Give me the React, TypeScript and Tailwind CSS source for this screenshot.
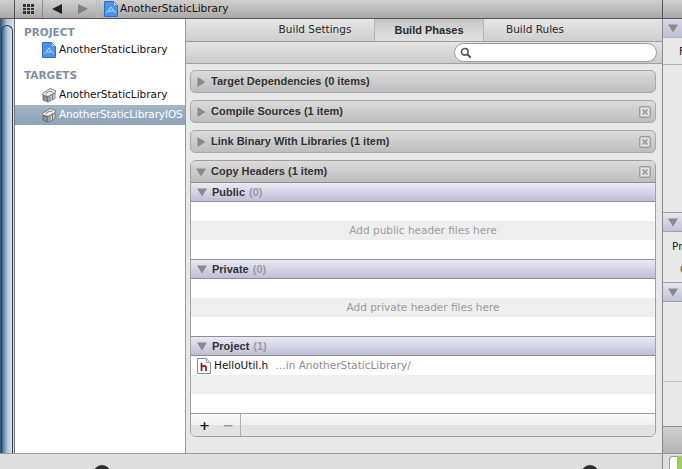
import React from "react";

const ink = "text-[#2a2a2a]";
const heavy = "font-['Liberation_Sans',sans-serif] text-[11px] font-bold";

const Triangle = ({ down }: { down?: boolean }) => (
  <svg width="10" height="10" viewBox="0 0 10 10" className="shrink-0">
    {down ? <path d="M0 1.5h10L5 9.5z" fill="#8a8a8a" /> : <path d="M1.500 0v10L9.500 5z" fill="#8a8a8a" />}
  </svg>
);

const CloseBox = () => (
  <svg width="12" height="12" viewBox="0 0 12 12" className="ml-auto shrink-0">
    <rect x="0.500" y="0.500" width="11" height="11" rx="1.500" fill="#c4c4c4" stroke="#9c9c9c" />
    <rect x="2.500" y="2.500" width="7" height="7" fill="#d6d6d6" stroke="#eeeeee" strokeWidth="0.700" />
    <path d="M3.500 3.500l5 5M8.500 3.500l-5 5" stroke="#929292" strokeWidth="1.100" />
  </svg>
);

const ProjectIcon = () => (
  <svg width="14" height="16" viewBox="0 0 14 16" className="shrink-0">
    <path d="M0.500 0.500h9l4 4v11h-13z" fill="#4f95e6" stroke="#2f6fc0" />
    <path d="M9.500 0.500v4h4z" fill="#d5e6f8" stroke="#2f6fc0" strokeWidth="0.600" />
    <path d="M2.500 12L7 6l4.500 6M5 10h4" fill="none" stroke="#cfe3fa" strokeWidth="0.900" />
  </svg>
);

// little grey "temple" used for static library targets
const TargetIcon = () => (
  <svg width="16" height="16" viewBox="0 0 16 16" className="shrink-0">
    <path d="M1.500 6.500L9 1.500l5.500 2v2L7 9.500 1.500 8z" fill="#ececec" stroke="#6a6a6a" strokeWidth="0.800" />
    <path d="M2 8.500l5 1.500v5L2 13z" fill="#8f8f8f" stroke="#5f5f5f" strokeWidth="0.800" />
    <path d="M7 10l7-4v5.500l-7 3.500z" fill="#d2d2d2" stroke="#6a6a6a" strokeWidth="0.800" />
    <path d="M4.500 6.500l4-2.500 3 1" fill="none" stroke="#7a7a7a" strokeWidth="1" />
    <path d="M9 9.500v4M11.500 8v4" stroke="#777777" strokeWidth="1.100" />
  </svg>
);

const SearchIcon = () => (
  <svg width="12" height="12" viewBox="0 0 12 12" className="shrink-0">
    <circle cx="4.800" cy="4.800" r="3.300" fill="none" stroke="#555555" strokeWidth="1.600" />
    <path d="M7.300 7.300l3.500 3.500" stroke="#555555" strokeWidth="2" />
  </svg>
);

const HeaderFileIcon = () => (
  <svg width="14" height="16" viewBox="0 0 14 16" className="shrink-0">
    <path d="M0.500 0.500h9l4 4v11h-13z" fill="#ffffff" stroke="#8a8a8a" />
    <path d="M9.500 0.500v4h4" fill="#e4e4e4" stroke="#8a8a8a" strokeWidth="0.700" />
    <path d="M4.500 5v8M4.500 9c1-1.500 4.500-1.800 4.500 0.500V13" fill="none" stroke="#8e1414" strokeWidth="1.700" />
  </svg>
);

const PhaseBar = ({ label, closable }: { label: string; closable?: boolean }) => (
  <div className="flex h-[23px] items-center rounded-[5px] border border-[#a9a9a9] bg-gradient-to-b from-[#dcdcdc] to-[#bdbdbd] pl-[5px] pr-[4px]">
    <Triangle />
    <span className={`ml-[5px] ${heavy} text-[#333333]`}>{label}</span>
    {closable && <CloseBox />}
  </div>
);

const GroupHeader = ({ name, count }: { name: string; count: number }) => (
  <div className={`flex h-[20px] items-center border-y border-[#8f8f8f] bg-gradient-to-b from-[#eaeaf6] to-[#bdbfd8] pl-[6px] ${heavy}`}>
    <Triangle down />
    <span className="ml-[5px] text-[#333333]">{name}</span>
    <span className="ml-[4px] text-[#9a9a9a]">({count})</span>
  </div>
);

const EmptyGroup = ({ hint }: { hint: string }) => (
  <div className="flex flex-col">
    <div className="h-[19px] bg-white" />
    <div className="flex h-[19px] items-center justify-center bg-[#eeeeee] text-[10.500px] text-[#9c9c9c]">{hint}</div>
    <div className="h-[19px] bg-white" />
  </div>
);

const SidebarRow = ({ label, selected, children }: { label: string; selected?: boolean; children: React.ReactNode }) => (
  <div className={`flex h-[20px] items-center pl-[25px] text-[10.500px] ${selected ? "bg-gradient-to-b from-[#a3b6c9] to-[#8ba1b6] tracking-[-0.130px] text-white" : "text-[#111111]"}`}>
    <div className="flex w-[18px] justify-center">{children}</div>
    <span className="ml-[1px] whitespace-nowrap">{label}</span>
  </div>
);

export default function App() {
  return (
    <div className="flex h-[469px] w-[682px] flex-col overflow-hidden bg-[#dedede] font-['DejaVu_Sans',sans-serif]">
      {/* breadcrumb toolbar */}
      <div className="flex h-[19px] shrink-0 items-center border-b border-[#555555] bg-gradient-to-b from-[#d0d0d0] to-[#a9a9a9]">
        <div className="h-full w-[15px] border-r border-[#555555]" />
        <div className="flex h-full w-[28px] items-center justify-center border-r border-[#8f8f8f]">
          <div className="grid grid-cols-3 gap-[1px]">
            {Array.from({ length: 9 }).map((_, i) => (
              <div key={i} className="h-[2.500px] w-[3px] bg-[#333333]" />
            ))}
          </div>
        </div>
        <svg width="10" height="10" viewBox="0 0 10 10" className="ml-[9px]"><path d="M10 0v10L0 5z" fill="#222222" /></svg>
        <svg width="10" height="10" viewBox="0 0 10 10" className="ml-[16px]"><path d="M0 0v10l10-5z" fill="#808080" /></svg>
        <div className="ml-[8px] h-full w-[4px] border-x border-[#bbbbbb]" />
        <div className="ml-[4px]"><ProjectIcon /></div>
        <span className="ml-[2px] text-[10.500px] text-[#111111]">AnotherStaticLibrary</span>
        <div className="ml-auto mr-[19px] h-full border-r border-[#555555]" />
      </div>

      <div className="flex min-h-0 flex-1">
        {/* navigator edge */}
        <div className="w-[15px] shrink-0 border-r border-[#777777] bg-gradient-to-r from-[#2d5478] via-[#b9cbdb] to-[#d7dfe7] pt-[6px]">
          <div className="ml-[1px] h-full w-[12px] rounded-t-[6px] border-x border-t border-[#26405a] bg-gradient-to-r from-[#3d688f] via-[#aebfd0] to-[#dbe4ec]" />
        </div>

        {/* project / targets list */}
        <div className="flex w-[171px] shrink-0 flex-col border-r border-[#9a9a9a] bg-white pt-[6px]">
          <div className="flex h-[15px] items-center pl-[9px] text-[10.500px] font-bold text-[#7d8ea6]">PROJECT</div>
          <SidebarRow label="AnotherStaticLibrary"><ProjectIcon /></SidebarRow>
          <div className="mt-[7px] flex h-[18px] items-center pl-[9px] text-[10.500px] font-bold text-[#7d8ea6]">TARGETS</div>
          <SidebarRow label="AnotherStaticLibrary"><TargetIcon /></SidebarRow>
          <SidebarRow label="AnotherStaticLibraryIOS" selected><TargetIcon /></SidebarRow>
        </div>

        {/* build phases */}
        <div className="flex w-[476px] shrink-0 flex-col bg-[#e8e8e8]">
          <div className="flex h-[23px] shrink-0 border-b border-[#9c9c9c] bg-gradient-to-b from-[#e6e6e6] to-[#cfcfcf] pl-[70px]">
            <div className={`flex h-full w-[118px] items-center justify-center text-[10.500px] font-medium ${ink}`}>Build Settings</div>
            <div className={`flex h-full w-[110px] items-center justify-center border-x border-[#b5b5b5] bg-gradient-to-b from-[#c4c4c4] via-[#d6d6d6] to-[#e0e0e0] ${heavy} ${ink}`}>Build Phases</div>
            <div className={`flex h-full w-[102px] items-center justify-center text-[10.500px] font-medium ${ink}`}>Build Rules</div>
          </div>
          <div className="flex h-[22px] shrink-0 items-center justify-end border-b border-[#a0a0a0] bg-gradient-to-b from-[#e4e4e4] to-[#cbcbcb] pr-[5px]">
            <div className="flex h-[19px] w-[203px] items-center rounded-full border border-[#9b9b9b] bg-white pl-[5px]">
              <SearchIcon />
            </div>
          </div>

          <div className="flex flex-1 flex-col gap-[7px] pl-[4px] pr-[6px] pt-[6px]">
            <PhaseBar label="Target Dependencies (0 items)" />
            <PhaseBar label="Compile Sources (1 item)" closable />
            <PhaseBar label="Link Binary With Libraries (1 item)" closable />
            <div className="flex flex-col overflow-hidden rounded-[6px] border border-[#a0a0a0] bg-white">
              <div className="flex h-[21px] items-center bg-gradient-to-b from-[#dcdcdc] to-[#bdbdbd] pl-[5px] pr-[4px]">
                <Triangle down />
                <span className={`ml-[5px] ${heavy} text-[#333333]`}>Copy Headers (1 item)</span>
                <CloseBox />
              </div>
              <GroupHeader name="Public" count={0} />
              <EmptyGroup hint="Add public header files here" />
              <GroupHeader name="Private" count={0} />
              <EmptyGroup hint="Add private header files here" />
              <GroupHeader name="Project" count={1} />
              <div className="flex h-[19px] items-center bg-white pl-[6px] text-[10.500px]">
                <HeaderFileIcon />
                <span className="ml-[3px] text-[#111111]">HelloUtil.h</span>
                <span className="ml-[7px] text-[#8c8c8c]">…in AnotherStaticLibrary/</span>
              </div>
              <div className="h-[19px] bg-[#eeeeee]" />
              <div className="h-[20px] border-b border-[#a0a0a0] bg-white" />
              <div className="flex h-[22px] items-center bg-[linear-gradient(#f8f8f8_0%,#f0f0f0_50%,#e2e2e2_50%,#e2e2e2_100%)] pl-[8px]">
                <span className="text-[13px] font-bold leading-none text-[#111111]">+</span>
                <span className="ml-[13px] text-[13px] font-bold leading-none text-[#999999]">−</span>
                <div className="ml-[6px] h-full border-r border-[#b0b0b0]" />
              </div>
            </div>
          </div>
        </div>

        {/* inspector edge */}
        <div className="flex min-w-0 flex-1 flex-col border-l border-[#8a8a8a] bg-[#e8e8e8]">
          <div className="h-[18px] shrink-0 bg-gradient-to-b from-[#d8d8e8] to-[#bcbed6] pl-[5px] pt-[4px]"><Triangle down /></div>
          <div className="h-[28px] shrink-0 overflow-hidden border-y border-[#b4b4b4] pl-[16px] pt-[6px] text-[10.500px] text-[#222222]">F</div>
          <div className="h-[147px] shrink-0" />
          <div className="flex h-[20px] shrink-0 items-center border-y border-[#a0a0a0] bg-gradient-to-b from-[#e6e6f2] to-[#bfc1d8] pl-[5px]"><Triangle down /></div>
          <div className="h-[50px] shrink-0 overflow-hidden whitespace-nowrap pl-[9px] pt-[3px] text-[10.500px] leading-[23px] text-[#222222]">Pr<br /><span className="pl-[8px] text-[#7a5a20]">C</span></div>
          <div className="flex h-[20px] shrink-0 items-center border-y border-[#a0a0a0] bg-gradient-to-b from-[#e6e6f2] to-[#bfc1d8] pl-[5px]"><Triangle down /></div>
          <div className="h-[80px] shrink-0 border-b border-[#c4c4c4]" />
          <div className="h-[45px] shrink-0 border-b border-[#8a8a8a]" />
          <div className="flex-1 bg-gradient-to-b from-[#cfcfcf] to-[#b4b4b4]" />
        </div>
      </div>

      {/* bottom library strip */}
      <div className="flex h-[16px] shrink-0 overflow-hidden border-t border-[#9a9a9a] bg-[#dedede] pl-[15px]">
        <div className="ml-[78px] mt-[11px] h-[18px] w-[18px] shrink-0 rounded-full bg-[#2e2e2e]" />
        <div className="ml-[470px] mt-[11px] h-[18px] w-[18px] shrink-0 rounded-full bg-[#2e2e2e]" />
        <div className="ml-[63px] flex h-full w-[20px] shrink-0 border-l border-[#8a8a8a] pl-[6px] pt-[2px]">
          <div className="h-[20px] w-[8px] shrink-0 rounded-l-[4px] border border-r-0 border-[#9a9a9a] bg-white" />
          <div className="h-[20px] w-[6px] shrink-0 bg-[#9ccf5a]" />
        </div>
      </div>
    </div>
  );
}
